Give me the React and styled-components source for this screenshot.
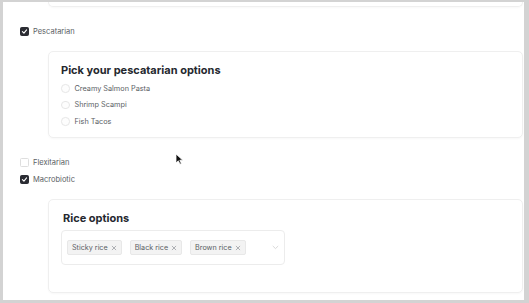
import React from "react";
import styled, { createGlobalStyle } from "styled-components";

const Global = createGlobalStyle`
  html, body { margin: 0; padding: 0; background: #ffffff; }
  body { font-family: Inter, "Noto Sans", sans-serif; }
  * { box-sizing: border-box; }
`;

const Frame = styled.div`
  position: relative;
  width: 529px;
  height: 303px;
  overflow: hidden;
  background: #ffffff;
  border-style: solid;
  border-color: #d3d3d3;
  border-width: 2px 5px 3px 3px;
  padding: 0 1px 0 17px;
  display: flex;
  flex-direction: column;
`;

const CardTail = styled.div`
  margin-left: 28px;
  height: 5px;
  border: 1px solid #efefef;
  border-top: none;
  border-radius: 0 0 5px 5px;
  box-shadow: 0 1px 2px rgba(0, 0, 0, 0.03);
`;

const CheckRow = styled.label`
  display: flex;
  align-items: center;
  gap: 4px;
  height: 17px;
  margin-top: ${(p) => p.$mt || 0}px;
  font-size: 7.5px;
  color: #5a5e64;
`;

const Box = styled.span`
  width: 9px;
  height: 9px;
  border-radius: 1.5px;
  display: inline-flex;
  align-items: center;
  justify-content: center;
  background: ${(p) => (p.$checked ? "#2b2c33" : "#ffffff")};
  border: 1px solid ${(p) => (p.$checked ? "#2b2c33" : "#dedede")};
`;

const Card = styled.div`
  margin-left: 28px;
  margin-top: ${(p) => p.$mt}px;
  height: ${(p) => p.$h}px;
  border: 1px solid #efefef;
  border-radius: 5px;
  box-shadow: 0 1px 2px rgba(0, 0, 0, 0.03);
  padding: 10px 13px 0 12px;
  display: flex;
  flex-direction: column;
`;

const Heading = styled.h3`
  margin: 0;
  padding-left: ${(p) => p.$pl || 0}px;
  font-size: 11px;
  line-height: 17px;
  font-weight: 700;
  color: #25282e;
`;

const RadioList = styled.div`
  display: flex;
  flex-direction: column;
  margin-top: 1px;
`;

const RadioRow = styled.label`
  display: flex;
  align-items: center;
  gap: 5px;
  height: 16.5px;
  font-size: 7.3px;
  color: #5a5e64;
`;

const Radio = styled.span`
  width: 8.5px;
  height: 8.5px;
  border-radius: 50%;
  border: 1px solid #e6e6e6;
  background: #fdfdfd;
`;

const Select = styled.div`
  margin-top: 3px;
  width: 224px;
  height: 35px;
  border: 1px solid #ececec;
  border-radius: 4px;
  display: flex;
  align-items: center;
  padding: 0 5px 0 5px;
  gap: 8px;
`;

const Chip = styled.span`
  display: inline-flex;
  align-items: center;
  gap: 3px;
  height: 15px;
  padding: 0 4px 0 4px;
  background: #f3f3f3;
  border: 1px solid #e8e8e8;
  border-radius: 2px;
  font-size: 7.2px;
  color: #5a5e64;
`;

const Chevron = styled.span`
  margin-left: auto;
  display: inline-flex;
`;

const Cursor = styled.svg`
  position: absolute;
  left: 172px;
  top: 151px;
`;

const Check = () => (
  <svg width="7" height="7" viewBox="0 0 10 10">
    <path d="M2 5.2 L4.2 7.3 L8 2.8" fill="none" stroke="#fff" strokeWidth="1.6" strokeLinecap="round" strokeLinejoin="round" />
  </svg>
);

const X = () => (
  <svg width="6" height="6" viewBox="0 0 10 10">
    <path d="M2 2 L8 8 M8 2 L2 8" stroke="#8a8d92" strokeWidth="1.1" strokeLinecap="round" />
  </svg>
);

const CheckItem = ({ checked, label, mt }) => (
  <CheckRow $mt={mt}>
    <Box $checked={checked}>{checked && <Check />}</Box>
    {label}
  </CheckRow>
);

export default function App() {
  return (
    <>
      <Global />
      <Frame>
        <CardTail />
        <CheckItem checked label="Pescatarian" mt={16} />
        <Card $mt={11} $h={87}>
          <Heading>Pick your pescatarian options</Heading>
          <RadioList>
            {["Creamy Salmon Pasta", "Shrimp Scampi", "Fish Tacos"].map((o) => (
              <RadioRow key={o}>
                <Radio />
                {o}
              </RadioRow>
            ))}
          </RadioList>
        </Card>
        <CheckItem label="Flexitarian" mt={15.5} />
        <CheckItem checked label="Macrobiotic" />
        <Card $mt={11.5} $h={94}>
          <Heading $pl={2}>Rice options</Heading>
          <Select>
            {["Sticky rice", "Black rice", "Brown rice"].map((c) => (
              <Chip key={c}>
                {c}
                <X />
              </Chip>
            ))}
            <Chevron>
              <svg width="7" height="5" viewBox="0 0 10 6">
                <path d="M1.5 1.2 L5 4.6 L8.5 1.2" fill="none" stroke="#c9c9c9" strokeWidth="1" strokeLinecap="round" />
              </svg>
            </Chevron>
          </Select>
        </Card>
        <Cursor width="9" height="12" viewBox="0 0 9 12">
          <path d="M1 1 L1 10 L3.3 7.8 L5 11.2 L6.4 10.5 L4.8 7.2 L7.8 7.2 Z" fill="#111" stroke="#fff" strokeWidth="0.8" />
        </Cursor>
      </Frame>
    </>
  );
}
